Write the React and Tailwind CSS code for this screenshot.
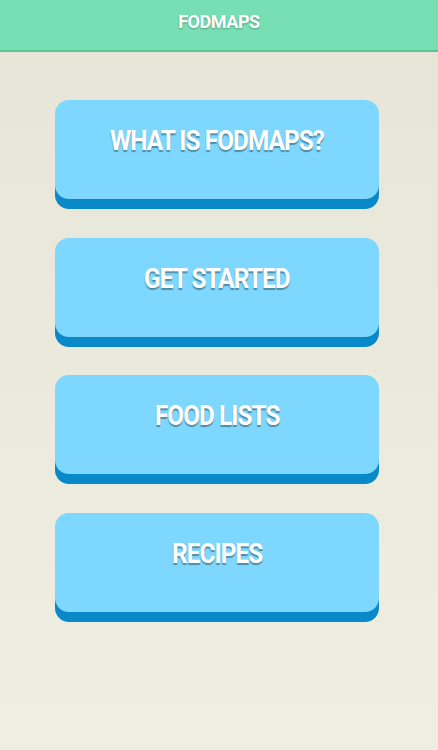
import React from "react";

const items = ["WHAT IS FODMAPS?", "GET STARTED", "FOOD LISTS", "RECIPES"];

export default function App() {
  return (
    <div
      className="min-h-[750px] w-full bg-gradient-to-b from-[#e6e5d8] to-[#efefe1]"
      style={{ fontFamily: "Roboto, 'Noto Sans', sans-serif" }}
    >
      <div className="h-[52px] bg-[#77dfb3] border-b-2 border-[#5dc493] flex justify-center pt-[10px]">
        <span className="inline-block scale-x-[0.95] text-white font-bold text-[19px] leading-[24px] tracking-[-0.5px] [text-shadow:0_1px_2px_rgba(0,0,0,0.3)]">
          FODMAPS
        </span>
      </div>

      <div className="flex flex-col gap-[38.5px] pt-[48px] pl-[55px]">
        {items.map((label) => (
          <button
            key={label}
            className="w-[324px] h-[99px] rounded-[14px] bg-[#7dd7fe] shadow-[0_10px_0_#0a89c8] flex justify-center pt-[24px]"
          >
            <span className="inline-block scale-x-[0.9] text-white font-bold text-[27px] tracking-[-1px] leading-[34px] [text-shadow:0_2px_1px_rgba(0,0,0,0.35)]">
              {label}
            </span>
          </button>
        ))}
      </div>
    </div>
  );
}
